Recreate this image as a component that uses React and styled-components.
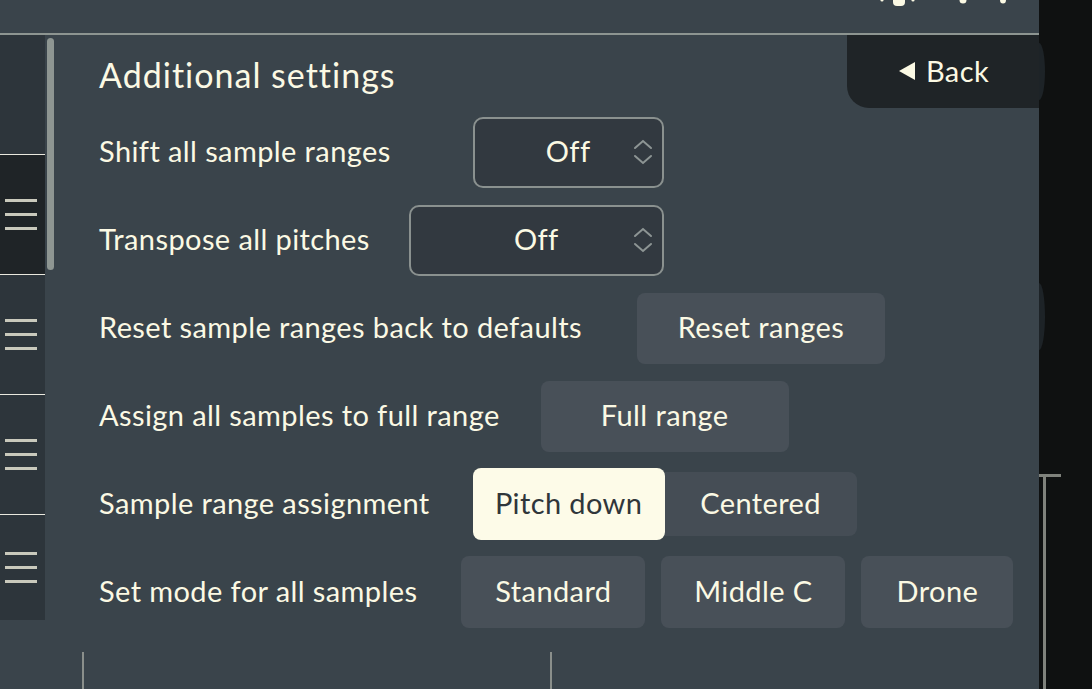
import styled, { createGlobalStyle } from "styled-components";

const GlobalStyle = createGlobalStyle`
  html, body {
    margin: 0;
    padding: 0;
    background: #0f1111;
  }
  * {
    box-sizing: border-box;
  }
`;

const Frame = styled.div`
  display: flex;
  width: 1092px;
  height: 689px;
  overflow: hidden;
  font-family: Lato, "Noto Sans", sans-serif;
  letter-spacing: 0.4px;
  color: #fbf9e4;
`;

const Main = styled.div`
  width: 1039px;
  display: flex;
  flex-direction: column;
  background: #3a444b;
`;

const Header = styled.div`
  height: 35px;
  flex-shrink: 0;
  border-bottom: 2px solid #8d9591;
  display: flex;
  justify-content: flex-end;
  align-items: flex-start;
  padding-right: 29px;
`;

const Body = styled.div`
  flex: 1;
  display: flex;
  min-height: 0;
`;

const Sidebar = styled.div`
  width: 45px;
  flex-shrink: 0;
  display: flex;
  flex-direction: column;
`;

const Segment = styled.div`
  height: ${p => p.$h}px;
  flex-shrink: 0;
  background: ${p => (p.$active ? "#1f2427" : "#2d353b")};
  border-bottom: ${p => (p.$last ? "none" : "1px solid #e9e8de")};
  display: flex;
  flex-direction: column;
  justify-content: center;
  gap: 11px;
  padding-left: 5px;
`;

const Bar = styled.span`
  display: block;
  width: 32px;
  height: 3px;
  background: #c9c9bc;
`;

const ScrollTrack = styled.div`
  width: 12px;
  flex-shrink: 0;
  padding: 3px 0 0 2px;
`;

const Thumb = styled.div`
  width: 7px;
  height: 232px;
  border-radius: 4px;
  background: #8e9692;
`;

const Content = styled.div`
  flex: 1;
  display: flex;
  flex-direction: column;
  padding-left: 42px;
`;

const TitleRow = styled.div`
  height: 81px;
  display: flex;
  justify-content: space-between;
  align-items: flex-start;
`;

const Title = styled.h1`
  margin: 0;
  padding-top: 20px;
  font-size: 34px;
  line-height: 40px;
  font-weight: 400;
  letter-spacing: 1px;
`;

const BackTab = styled.button`
  width: 192px;
  height: 73px;
  border: none;
  border-bottom-left-radius: 22px;
  background: #1f2427;
  color: #fbf9e4;
  font-family: inherit;
  letter-spacing: inherit;
  font-size: 29px;
  display: flex;
  align-items: center;
  justify-content: center;
  gap: 10px;
  padding: 0 0 2px 2px;
`;

const Rows = styled.div`
  display: flex;
  flex-direction: column;
  gap: 16px;
`;

const Row = styled.div`
  display: flex;
  align-items: center;
  height: 72px;
  gap: ${p => p.$gap}px;
`;

const Label = styled.span`
  font-size: 29px;
  padding-bottom: 3px;
  white-space: nowrap;
`;

const Select = styled.div`
  position: relative;
  width: ${p => p.$w}px;
  height: 71px;
  border: 2px solid #8a918f;
  border-radius: 10px;
  background: #323940;
  display: flex;
  align-items: center;
  justify-content: center;
  font-size: 29px;
  padding-bottom: 3px;
`;

const Chevrons = styled.svg`
  position: absolute;
  right: 9px;
  top: 50%;
  transform: translateY(-50%);
`;

const Button = styled.button`
  width: ${p => p.$w}px;
  height: ${p => p.$h || 71}px;
  border: none;
  border-radius: 8px;
  background: #485058;
  color: #fbf9e4;
  font-family: inherit;
  letter-spacing: inherit;
  font-size: 29px;
  padding: 0 0 3px;
`;

const Segmented = styled.div`
  display: flex;
  align-items: center;
`;

const SegOption = styled.button`
  width: 192px;
  height: ${p => (p.$on ? 72 : 64)}px;
  border: none;
  border-radius: ${p => (p.$on ? "8px" : "0 8px 8px 0")};
  background: ${p => (p.$on ? "#fdfbe8" : "#454d55")};
  color: ${p => (p.$on ? "#30363a" : "#fbf9e4")};
  font-family: inherit;
  letter-spacing: inherit;
  font-size: 29px;
  padding: 0 0 3px;
`;

const ModeGroup = styled.div`
  display: flex;
  gap: 16px;
`;

const Footer = styled.div`
  flex: 1;
  display: flex;
  gap: 466px;
  margin: 24px 0 0 -17px;
`;

const Rule = styled.span`
  width: 2px;
  background: #8a8f8b;
`;

const Strip = styled.div`
  flex: 1;
  display: flex;
  flex-direction: column;
  background: #0f1111;
`;

const Knob = styled.div`
  width: 6px;
  height: ${p => p.$h}px;
  margin-top: ${p => p.$top}px;
  border-radius: 0 100% 100% 0 / 0 50% 50% 0;
  background: #1d2327;
`;

const Marker = styled.div`
  width: 22px;
  flex: 1;
  margin-top: 124px;
  border-top: 3px solid #7f827c;

  &::before {
    content: "";
    display: block;
    margin-left: 4px;
    width: 3px;
    height: 100%;
    background: #7f827c;
  }
`;

function Hamburger() {
  return (
    <>
      <Bar />
      <Bar />
      <Bar />
    </>
  );
}

function ChevronIcon() {
  return (
    <Chevrons width="20" height="28" viewBox="0 0 20 28" fill="none" stroke="#8d9594" strokeWidth="2" strokeLinecap="round">
      <path d="M2 10 L10 3 L18 10" />
      <path d="M2 18 L10 25 L18 18" />
    </Chevrons>
  );
}

export default function App() {
  return (
    <>
      <GlobalStyle />
      <Frame>
        <Main>
          <Header>
            <svg width="130" height="8" viewBox="0 0 130 8">
              <g fill="#fbf9e4">
                <circle cx="2" cy="0" r="1.6" />
                <rect x="13" y="-6" width="12" height="12" rx="4" />
                <circle cx="33" cy="0" r="1.6" />
                <ellipse cx="83" cy="0" rx="3.5" ry="3.5" />
                <ellipse cx="123" cy="0" rx="3" ry="3.5" />
              </g>
            </svg>
          </Header>
          <Body>
            <Sidebar>
              <Segment $h={120} />
              <Segment $h={120} $active>
                <Hamburger />
              </Segment>
              <Segment $h={120}>
                <Hamburger />
              </Segment>
              <Segment $h={120}>
                <Hamburger />
              </Segment>
              <Segment $h={105} $last>
                <Hamburger />
              </Segment>
            </Sidebar>
            <ScrollTrack>
              <Thumb />
            </ScrollTrack>
            <Content>
              <TitleRow>
                <Title>Additional settings</Title>
                <BackTab>
                  <svg width="17" height="18" viewBox="0 0 17 18">
                    <polygon points="0,9 16,0 16,18" fill="#fbf9e4" />
                  </svg>
                  Back
                </BackTab>
              </TitleRow>
              <Rows>
                <Row $gap={82}>
                  <Label>Shift all sample ranges</Label>
                  <Select $w={191}>
                    Off
                    <ChevronIcon />
                  </Select>
                </Row>
                <Row $gap={39}>
                  <Label>Transpose all pitches</Label>
                  <Select $w={255}>
                    Off
                    <ChevronIcon />
                  </Select>
                </Row>
                <Row $gap={55}>
                  <Label>Reset sample ranges back to defaults</Label>
                  <Button $w={248}>Reset ranges</Button>
                </Row>
                <Row $gap={41}>
                  <Label>Assign all samples to full range</Label>
                  <Button $w={248}>Full range</Button>
                </Row>
                <Row $gap={43}>
                  <Label>Sample range assignment</Label>
                  <Segmented>
                    <SegOption $on>Pitch down</SegOption>
                    <SegOption>Centered</SegOption>
                  </Segmented>
                </Row>
                <Row $gap={44}>
                  <Label>Set mode for all samples</Label>
                  <ModeGroup>
                    <Button $w={184} $h={72}>Standard</Button>
                    <Button $w={184} $h={72}>Middle C</Button>
                    <Button $w={152} $h={72}>Drone</Button>
                  </ModeGroup>
                </Row>
              </Rows>
              <Footer>
                <Rule />
                <Rule />
              </Footer>
            </Content>
          </Body>
        </Main>
        <Strip>
          <Knob $top={43} $h={57} />
          <Knob $top={183} $h={67} />
          <Marker />
        </Strip>
      </Frame>
    </>
  );
}
